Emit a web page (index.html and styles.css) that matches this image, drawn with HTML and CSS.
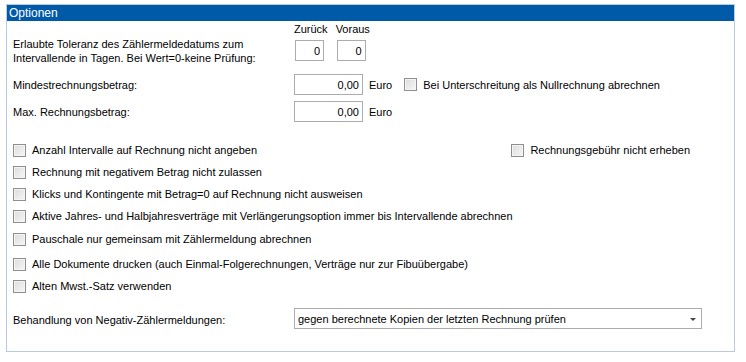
FILE: index.html
```html
<!DOCTYPE html>
<html lang="de">
<head>
<meta charset="utf-8">
<title>Optionen</title>
<link rel="stylesheet" href="styles.css">
</head>
<body>
<div class="group">
  <div class="group-title">Optionen</div>
  <div class="group-body">
    <div class="row tol-row">
      <div class="label tol-label">Erlaubte Toleranz des Zählermeldedatums zum<br>Intervallende in Tagen. Bei Wert=0-keine Prüfung:</div>
      <div class="tol-fields">
        <div class="tol-col">
          <div class="col-head">Zurück</div>
          <input class="num small" type="text" value="0">
        </div>
        <div class="tol-col">
          <div class="col-head">Voraus</div>
          <input class="num small" type="text" value="0">
        </div>
      </div>
    </div>

    <div class="row amount-row first-amount">
      <div class="label">Mindestrechnungsbetrag:</div>
      <input class="num wide" type="text" value="0,00">
      <span class="unit">Euro</span>
      <label class="check inline-check"><input type="checkbox"><span>Bei Unterschreitung als Nullrechnung abrechnen</span></label>
    </div>

    <div class="row amount-row second-amount">
      <div class="label">Max. Rechnungsbetrag:</div>
      <input class="num wide" type="text" value="0,00">
      <span class="unit">Euro</span>
    </div>

    <div class="checks">
      <div class="check-row split">
        <label class="check"><input type="checkbox"><span>Anzahl Intervalle auf Rechnung nicht angeben</span></label>
        <label class="check right-check"><input type="checkbox"><span>Rechnungsgebühr nicht erheben</span></label>
      </div>
      <div class="check-row"><label class="check"><input type="checkbox"><span>Rechnung mit negativem Betrag nicht zulassen</span></label></div>
      <div class="check-row"><label class="check"><input type="checkbox"><span>Klicks und Kontingente mit Betrag=0 auf Rechnung nicht ausweisen</span></label></div>
      <div class="check-row"><label class="check"><input type="checkbox"><span>Aktive Jahres- und Halbjahresverträge mit Verlängerungsoption immer bis Intervallende abrechnen</span></label></div>
      <div class="check-row nudge"><label class="check"><input type="checkbox"><span>Pauschale nur gemeinsam mit Zählermeldung abrechnen</span></label></div>
      <div class="check-row gap-before"><label class="check"><input type="checkbox"><span>Alle Dokumente drucken (auch Einmal-Folgerechnungen, Verträge nur zur Fibuübergabe)</span></label></div>
      <div class="check-row"><label class="check"><input type="checkbox"><span>Alten Mwst.-Satz verwenden</span></label></div>
    </div>

    <div class="row combo-row">
      <div class="label">Behandlung von Negativ-Zählermeldungen:</div>
      <div class="combo">
        <span class="combo-text">gegen berechnete Kopien der letzten Rechnung prüfen</span>
        <span class="combo-arrow"></span>
      </div>
    </div>
  </div>
</div>
</body>
</html>
```
FILE: styles.css
```css
* { box-sizing: border-box; }

html, body {
  margin: 0;
  padding: 0;
  background: #ffffff;
}

body {
  font-family: "Liberation Sans", Arial, sans-serif;
  font-size: 11px;
  color: #000;
  width: 746px;
  height: 362px;
  overflow: hidden;
}

.group {
  margin: 4px 0 0 6px;
  width: 729px;
  height: 348px;
  border: 1px solid #b9cadb;
  display: flex;
  flex-direction: column;
}

.group-title {
  height: 16px;
  background: #005aa8;
  color: #fff;
  font-size: 12px;
  line-height: 16px;
  padding-left: 2px;
}

.group-body {
  padding-left: 6px;
  display: flex;
  flex-direction: column;
}

.row {
  display: flex;
  align-items: center;
}

.label {
  width: 281px;
  flex: none;
  line-height: 14px;
}

.tol-row {
  align-items: flex-end;
  margin-top: 2px;
}

.tol-label {
  margin-bottom: -4px;
}

.tol-fields {
  display: flex;
  gap: 8px;
}

.tol-col {
  display: flex;
  flex-direction: column;
  align-items: flex-start;
}

.col-head {
  line-height: 13px;
  margin-bottom: 4px;
}

input.num {
  font-family: "Liberation Sans", Arial, sans-serif;
  font-size: 11px;
  height: 21px;
  border: 1px solid #acacac;
  background: #fff;
  color: #000;
  text-align: right;
  padding: 0 3px 0 2px;
  margin: 0;
  outline: none;
}

input.small {
  width: 29px;
  margin-left: 1px;
}

input.wide {
  width: 69px;
}

.unit {
  margin-left: 6px;
}

.first-amount { margin-top: 13px; }
.second-amount { margin-top: 6px; }

.check {
  display: flex;
  align-items: center;
  gap: 6px;
}

.check input[type="checkbox"] {
  appearance: none;
  -webkit-appearance: none;
  width: 13px;
  height: 13px;
  margin: 0;
  flex: none;
  border: 1px solid #8f8f8f;
  background: linear-gradient(135deg, #dcdcdc 0%, #ececec 60%, #f6f6f6 100%);
  box-shadow: inset 0 0 0 1px #f4f4f4;
}

.inline-check {
  margin-left: 12px;
}

.checks {
  margin-top: 17px;
  display: flex;
  flex-direction: column;
}

.check-row {
  height: 22px;
  display: flex;
  align-items: center;
}

.check-row.split {
  justify-content: space-between;
  padding-right: 44px;
}

.check-row.nudge {
  margin-top: 1px;
}

.check-row.gap-before {
  margin-top: 3px;
}

.combo-row {
  margin-top: 11px;
}

.combo-row .label {
  padding-top: 3px;
}

.combo {
  width: 408px;
  height: 21px;
  border: 1px solid #acacac;
  background: #fff;
  display: flex;
  align-items: center;
  justify-content: space-between;
  padding: 0 5px 0 3px;
}

.combo-arrow {
  width: 0;
  height: 0;
  border-left: 3px solid transparent;
  border-right: 3px solid transparent;
  border-top: 3px solid #444;
  margin-top: 1px;
}
```
